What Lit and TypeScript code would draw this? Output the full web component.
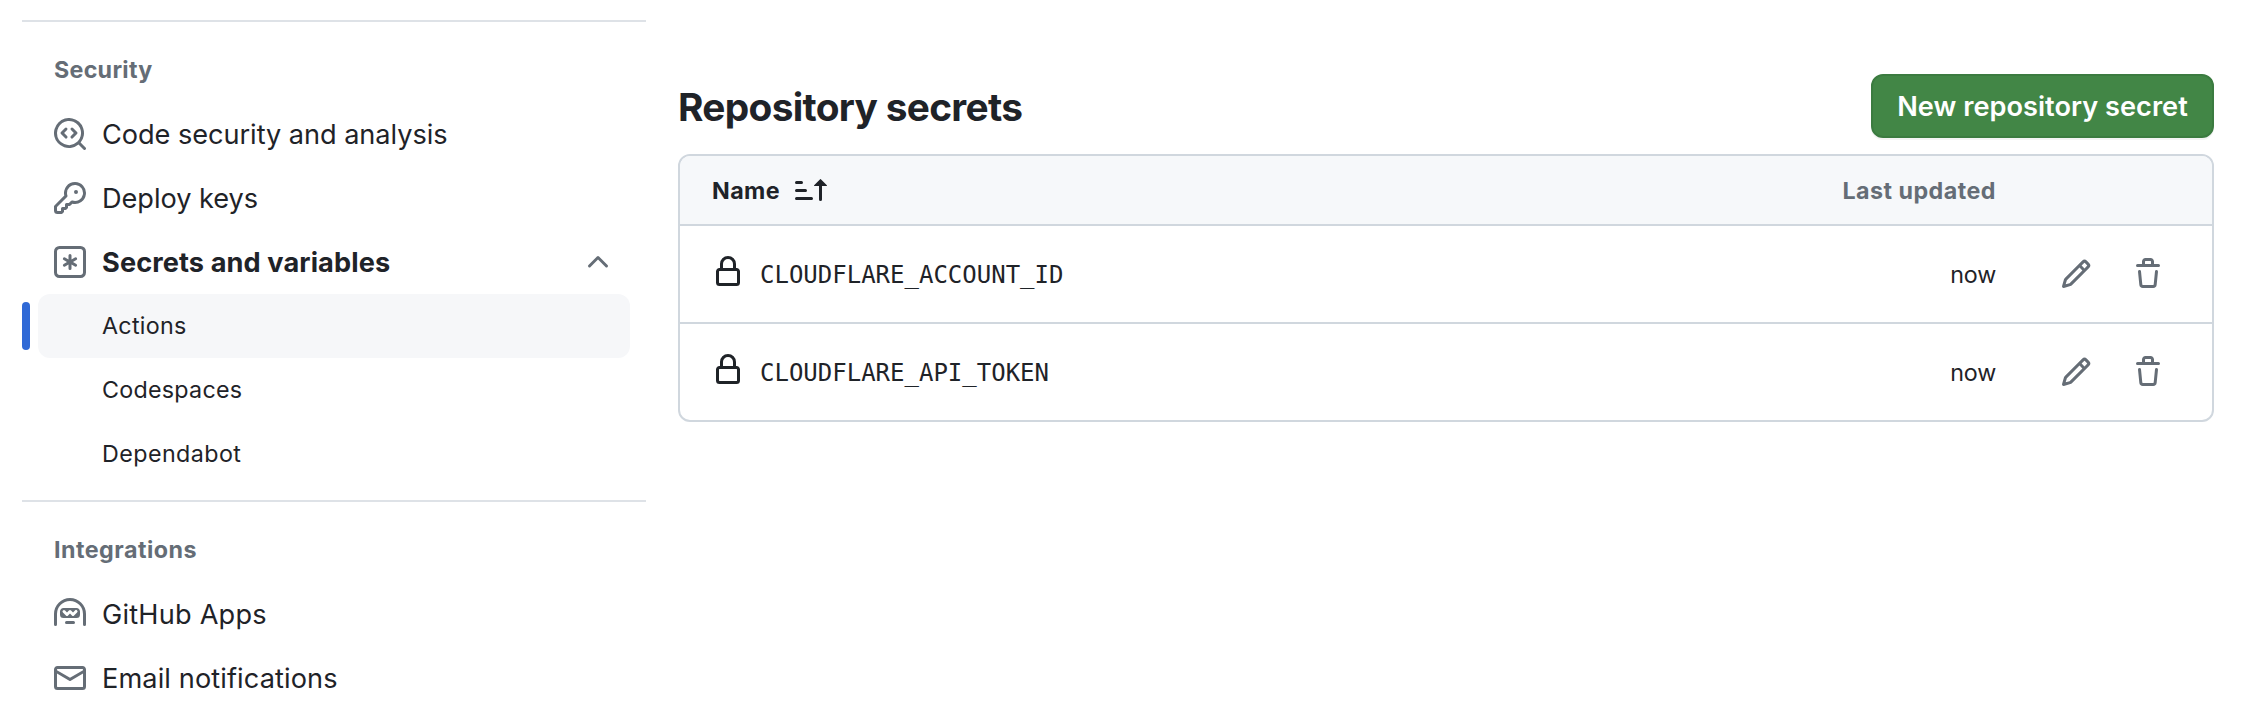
import { LitElement, html, css, svg } from "lit";
import { customElement, property } from "lit/decorators.js";
import { classMap } from "lit/directives/class-map.js";

const icons: Record<string, string[]> = {
  codescan: [
    "M8.47 4.97a.75.75 0 0 0 0 1.06L9.94 7.5 8.47 8.97a.75.75 0 1 0 1.06 1.06l2-2a.75.75 0 0 0 0-1.06l-2-2a.75.75 0 0 0-1.06 0ZM6.53 6.03a.75.75 0 0 0-1.06-1.06l-2 2a.75.75 0 0 0 0 1.06l2 2a.75.75 0 1 0 1.06-1.06L5.06 7.5l1.47-1.47Z",
    "M12.246 13.307a7.501 7.501 0 1 1 1.06-1.06l2.474 2.473a.749.749 0 1 1-1.06 1.06l-2.474-2.473ZM1.5 7.5a6.002 6.002 0 0 0 3.608 5.504 6.002 6.002 0 0 0 6.486-1.117.748.748 0 0 1 .292-.293A6 6 0 1 0 1.5 7.5Z",
  ],
  key: [
    "M10.5 0a5.499 5.499 0 1 1-1.288 10.848l-.932.932a.749.749 0 0 1-.53.22H7v.75a.749.749 0 0 1-.22.53l-.5.5a.749.749 0 0 1-.53.22H5v.75a.749.749 0 0 1-.22.53l-.5.5a.749.749 0 0 1-.53.22h-2A1.75 1.75 0 0 1 0 14.25v-2c0-.199.079-.389.22-.53l4.932-4.932A5.5 5.5 0 0 1 10.5 0Zm-4 5.5c-.001.431.069.86.205 1.269a.75.75 0 0 1-.181.768L1.5 12.56v1.69c0 .138.112.25.25.25h1.69l.06-.06v-1.19a.75.75 0 0 1 .75-.75h1.19l.06-.06v-1.19a.75.75 0 0 1 .75-.75h1.19l1.023-1.025a.75.75 0 0 1 .768-.18A4 4 0 1 0 6.5 5.5ZM11 6a1 1 0 1 1 0-2 1 1 0 0 1 0 2Z",
  ],
  asterisk: [
    "M0 2.75A2.75 2.75 0 0 1 2.75 0h10.5A2.75 2.75 0 0 1 16 2.75v10.5A2.75 2.75 0 0 1 13.25 16H2.75A2.75 2.75 0 0 1 0 13.25ZM2.75 1.5c-.69 0-1.25.56-1.25 1.25v10.5c0 .69.56 1.25 1.25 1.25h10.5c.69 0 1.25-.56 1.25-1.25V2.75c0-.69-.56-1.25-1.25-1.25Z",
    "M8 4a.75.75 0 0 1 .75.75V6.7l1.69-.975a.75.75 0 0 1 .75 1.3L9.5 8l1.69.976a.75.75 0 0 1-.75 1.298L8.75 9.3v1.951a.75.75 0 0 1-1.5 0V9.299l-1.69.976a.75.75 0 0 1-.75-1.3L6.5 8l-1.69-.975a.75.75 0 0 1 .75-1.3l1.69.976V4.75A.75.75 0 0 1 8 4Z",
  ],
  chevron: [
    "M3.22 10.53a.749.749 0 0 1 0-1.06l4.25-4.25a.749.749 0 0 1 1.06 0l4.25 4.25a.749.749 0 1 1-1.06 1.06L8 6.811 4.28 10.53a.749.749 0 0 1-1.06 0Z",
  ],
  hubot: [
    "M0 8a8 8 0 1 1 16 0v5.25a.75.75 0 0 1-1.5 0V8a6.5 6.5 0 1 0-13 0v5.25a.75.75 0 0 1-1.5 0Zm5.5 4.25a.75.75 0 0 1 .75-.75h3.5a.75.75 0 0 1 0 1.5h-3.5a.75.75 0 0 1-.75-.75ZM3 6.75C3 5.784 3.784 5 4.75 5h6.5c.966 0 1.75.784 1.75 1.75v1.5A1.75 1.75 0 0 1 11.25 10h-6.5A1.75 1.75 0 0 1 3 8.25Zm1.47-.53a.75.75 0 0 1 1.06 0l.97.97.97-.97a.75.75 0 0 1 1.06 0l.97.97.97-.97a.75.75 0 1 1 1.06 1.06l-1.5 1.5a.75.75 0 0 1-1.06 0L8 7.81l-.97.97a.75.75 0 0 1-1.06 0l-1.5-1.5a.75.75 0 0 1 0-1.06Z",
  ],
  mail: [
    "M1.75 2h12.5c.966 0 1.75.784 1.75 1.75v8.5A1.75 1.75 0 0 1 14.25 14H1.75A1.75 1.75 0 0 1 0 12.25v-8.5C0 2.784.784 2 1.75 2ZM1.5 12.251c0 .138.112.25.25.25h12.5a.25.25 0 0 0 .25-.25V5.809L8.38 9.397a.75.75 0 0 1-.76 0L1.5 5.809v6.442Zm13-8.181v-.32a.25.25 0 0 0-.25-.25H1.75a.25.25 0 0 0-.25.25v.32L8 7.88Z",
  ],
  sort: [
    "m12.927 2.573 3 3A.25.25 0 0 1 15.75 6H13.5v6.75a.75.75 0 0 1-1.5 0V6H9.75a.25.25 0 0 1-.177-.427l3-3a.25.25 0 0 1 .354 0ZM0 12.25a.75.75 0 0 1 .75-.75h7.5a.75.75 0 0 1 0 1.5H.75a.75.75 0 0 1-.75-.75Zm0-4a.75.75 0 0 1 .75-.75h4.5a.75.75 0 0 1 0 1.5H.75A.75.75 0 0 1 0 8.25Zm0-4a.75.75 0 0 1 .75-.75h2.5a.75.75 0 0 1 0 1.5H.75A.75.75 0 0 1 0 4.25Z",
  ],
  lock: [
    "M4 4a4 4 0 0 1 8 0v2h.25c.966 0 1.75.784 1.75 1.75v5.5A1.75 1.75 0 0 1 12.25 15h-8.5A1.75 1.75 0 0 1 2 13.25v-5.5C2 6.784 2.784 6 3.75 6H4Zm8.25 3.5h-8.5a.25.25 0 0 0-.25.25v5.5c0 .138.112.25.25.25h8.5a.25.25 0 0 0 .25-.25v-5.5a.25.25 0 0 0-.25-.25ZM10.5 6V4a2.5 2.5 0 1 0-5 0v2Z",
  ],
  pencil: [
    "M11.013 1.427a1.75 1.75 0 0 1 2.474 0l1.086 1.086a1.75 1.75 0 0 1 0 2.474l-8.61 8.61c-.21.21-.47.364-.756.445l-3.251.93a.75.75 0 0 1-.927-.928l.929-3.25c.081-.286.235-.547.445-.758l8.61-8.61Zm.176 4.823L9.75 4.81l-6.286 6.287a.253.253 0 0 0-.064.108l-.558 1.953 1.953-.558a.253.253 0 0 0 .108-.064Zm1.238-3.763a.25.25 0 0 0-.354 0L10.811 3.75l1.439 1.44 1.263-1.263a.25.25 0 0 0 0-.354Z",
  ],
  trash: [
    "M11 1.75V3h2.25a.75.75 0 0 1 0 1.5H2.75a.75.75 0 0 1 0-1.5H5V1.75C5 .784 5.784 0 6.75 0h2.5C10.216 0 11 .784 11 1.75ZM4.496 6.675l.66 6.6a.25.25 0 0 0 .249.225h5.19a.25.25 0 0 0 .249-.225l.66-6.6a.75.75 0 0 1 1.492.149l-.66 6.6A1.748 1.748 0 0 1 10.595 15h-5.19a1.75 1.75 0 0 1-1.741-1.575l-.66-6.6a.75.75 0 1 1 1.492-.15ZM6.5 1.75V3h3V1.75a.25.25 0 0 0-.25-.25h-2.5a.25.25 0 0 0-.25.25Z",
  ],
};

@customElement("ui-icon")
class UiIcon extends LitElement {
  @property() name = "";
  static styles = css`
    :host { display: block; width: 32px; height: 32px; flex: none; }
    svg { display: block; fill: currentColor; fill-rule: evenodd; }
  `;
  render() {
    return html`<svg width="32" height="32" viewBox="0 0 16 16" aria-hidden="true">
      ${(icons[this.name] ?? []).map((d) => svg`<path d=${d}></path>`)}
    </svg>`;
  }
}

interface NavItem {
  label: string;
  tracking: number;
  icon?: string;
  open?: boolean;
  selected?: boolean;
}

const groups: { title: string; tracking: number; items: NavItem[] }[] = [
  {
    title: "Security",
    tracking: 0.28,
    items: [
      { label: "Code security and analysis", tracking: -0.05, icon: "codescan" },
      { label: "Deploy keys", tracking: -0.03, icon: "key" },
      { label: "Secrets and variables", tracking: 0.1, icon: "asterisk", open: true },
      { label: "Actions", tracking: 0.27, selected: true },
      { label: "Codespaces", tracking: 0.26 },
      { label: "Dependabot", tracking: 0.43 },
    ],
  },
  {
    title: "Integrations",
    tracking: 0.48,
    items: [
      { label: "GitHub Apps", tracking: 0.2, icon: "hubot" },
      { label: "Email notifications", tracking: 0.1, icon: "mail" },
    ],
  },
];

const secrets = [
  { name: "CLOUDFLARE_ACCOUNT_ID", updated: "now" },
  { name: "CLOUDFLARE_API_TOKEN", updated: "now" },
];

@customElement("settings-nav")
class SettingsNav extends LitElement {
  static styles = css`
    :host { display: block; width: 624px; padding: 20px 2px 0 22px; flex: none; }
    .group { border-top: 2px solid #dee2e7; padding-bottom: 14px; }
    .title {
      height: 80px; padding-left: 32px; box-sizing: border-box; padding-top: 32px;
      font-size: 23.28px; line-height: 32px; font-weight: 700; color: #656d76;
    }
    .item { display: flex; align-items: stretch; height: 64px; padding-right: 16px; }
    .bar { width: 8px; height: 48px; margin: 8px 8px 8px 0; border-radius: 4px; flex: none; }
    .body {
      display: flex; align-items: center; flex: 1; gap: 16px; padding: 0 16px;
      border-radius: 12px; font-size: 27.16px; line-height: 40px; color: #1f2328;
    }
    .sub .body { padding-left: 64px; font-size: 23.28px; }
    .selected .body { background: #f6f7f9; }
    .selected .bar { background: #2f69d6; }
    .open .label { font-weight: 700; }
    .label { flex: 1; white-space: nowrap; padding-top: 2px; }
    .sub .label { padding-top: 0; }
    ui-icon { color: #656d76; }
  `;
  render() {
    return groups.map(
      (g) => html`<section class="group">
        <div class="title" style="letter-spacing:${g.tracking}px">${g.title}</div>
        ${g.items.map(
          (i) => html`<div class=${classMap({ item: true, sub: !i.icon, selected: !!i.selected, open: !!i.open })}>
            <span class="bar"></span>
            <div class="body">
              ${i.icon ? html`<ui-icon name=${i.icon}></ui-icon>` : null}
              <span class="label" style="letter-spacing:${i.tracking}px">${i.label}</span>
              ${i.open ? html`<ui-icon name="chevron"></ui-icon>` : null}
            </div>
          </div>`
        )}
      </section>`
    );
  }
}

@customElement("secrets-panel")
class SecretsPanel extends LitElement {
  static styles = css`
    :host { display: block; flex: 1; padding: 74px 30px 0 30px; color: #1f2328; }
    .head { display: flex; justify-content: space-between; align-items: center; height: 64px; margin-bottom: 16px; }
    h2 { margin: 0; font-size: 38.8px; line-height: 60px; font-weight: 700; letter-spacing: -0.68px; padding-top: 1px; }
    button {
      width: 343px; height: 64px; padding: 2px 0 0; box-sizing: border-box; border: 2px solid #3b7b40; border-radius: 12px;
      background: #428646; color: #fff; font: 600 27.16px/40px Inter, sans-serif; letter-spacing: 0.02px;
      white-space: nowrap; box-shadow: 0 2px 0 rgba(31, 35, 40, 0.05);
    }
    .box { border: 2px solid #d0d7de; border-radius: 12px; overflow: hidden; }
    .row { display: flex; align-items: center; height: 96px; padding: 0 48px 0 32px; border-top: 2px solid #d0d7de; font-size: 23.28px; line-height: 36px; }
    .header { height: 68px; border-top: 0; background: #f6f8fa; font-weight: 700; }
    .name { display: flex; align-items: center; flex: 1; }
    .header .name { gap: 15px; letter-spacing: 0.4px; }
    .header .label { padding-top: 1px; }
    .row .secret { gap: 16px; }
    .secret ui-icon { padding-bottom: 4px; }
    code { font: 24px/36px "DejaVu Sans Mono", monospace; padding-top: 2px; }
    .updated { letter-spacing: -0.2px; padding-top: 2px; }
    .header .updated { color: #656d76; letter-spacing: 0.48px; padding-top: 1px; }
    .actions { display: flex; justify-content: flex-end; gap: 40px; width: 168px; color: #656d76; }
  `;
  render() {
    return html`
      <div class="head"><h2>Repository secrets</h2><button>New repository secret</button></div>
      <div class="box">
        <div class="row header">
          <div class="name"><span class="label">Name</span><ui-icon name="sort"></ui-icon></div>
          <div class="updated">Last updated</div>
          <div class="actions"></div>
        </div>
        ${secrets.map(
          (s) => html`<div class="row">
            <div class="name secret"><ui-icon name="lock"></ui-icon><code>${s.name}</code></div>
            <div class="updated">${s.updated}</div>
            <div class="actions"><ui-icon name="pencil"></ui-icon><ui-icon name="trash"></ui-icon></div>
          </div>`
        )}
      </div>
    `;
  }
}

@customElement("app-root")
class AppRoot extends LitElement {
  static styles = css`
    :host { display: flex; height: 718px; overflow: hidden; background: #fff; font-family: Inter, sans-serif; }
  `;
  render() {
    return html`<settings-nav></settings-nav><secrets-panel></secrets-panel>`;
  }
}
